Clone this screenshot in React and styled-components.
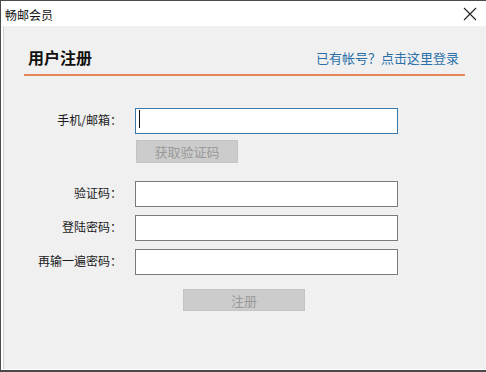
import React from 'react'
import styled, {createGlobalStyle} from 'styled-components'

const GlobalStyle = createGlobalStyle`
html, body {
  margin: 0;
  padding: 0;
  background: #f0f0f0;
}
body {
  font-family: "Noto Sans CJK SC", "Microsoft YaHei", sans-serif;
}
`

const Window = styled.div`
width: 486px;
height: 372px;
box-sizing: border-box;
display: flex;
flex-direction: column;
border-top: 1px solid #4a4a4a;
border-left: 1px solid #4a4a4a;
border-bottom: 2px solid #4a4a4a;
background: #ffffff;
overflow: hidden;
`

const TitleBar = styled.div`
height: 25px;
display: flex;
align-items: center;
justify-content: space-between;
padding: 1px 9px 0 4px;
box-sizing: border-box;
background: #ffffff;
font-size: 12px;
color: #111;
`

const Close = styled.button`
width: 14px;
height: 14px;
padding: 0;
border: none;
background: none;
display: flex;
`

const Body = styled.div`
flex: 1;
margin-left: 2px;
margin-bottom: 1px;
background: #f0f0f0;
border-left: 1px solid #d0d0d0;
padding-left: 1px;
`

const Header = styled.div`
margin: 20px 21px 0 19px;
height: 22px;
padding: 0 6px 6px 4px;
display: flex;
align-items: center;
justify-content: space-between;
border-bottom: 2px solid #e8885a;
`

const Heading = styled.h1`
margin: 0;
font-size: 16px;
font-weight: 700;
color: #111;
`

const Link = styled.a`
font-size: 13px;
color: #2a6fa9;
text-decoration: none;
cursor: pointer;
`

const Form = styled.div`
display: flex;
flex-direction: column;
margin-left: 20px;
padding-top: 30px;
`

const Row = styled.div`
display: grid;
grid-template-columns: 97px 263px;
column-gap: 13px;
align-items: center;
margin-top: ${pr => pr.$top}px;
`

const Label = styled.label`
text-align: right;
font-size: 12px;
color: #1a1a1a;
white-space: nowrap;
`

const FieldWrap = styled.div`
position: relative;
height: 26px;
`

const Input = styled.input`
width: 100%;
height: 100%;
box-sizing: border-box;
margin: 0;
border: 1px solid ${pr => pr.$focused ? '#3a79ad' : '#7a7a7a'};
background: #fff;
outline: none;
padding: 0 4px;
font-size: 12px;
`

const Caret = styled.span`
position: absolute;
left: 4px;
top: 4px;
width: 1px;
height: 18px;
background: #111;
`

const Button = styled.button`
grid-column: ${pr => pr.$col || 'auto'};
justify-self: start;
width: ${pr => pr.$w}px;
height: ${pr => pr.$h}px;
margin: 0 0 0 ${pr => pr.$left || 0}px;
padding: 0;
border: 1px solid #c4c4c4;
background: #cccccc;
color: #9a9a9a;
font-family: inherit;
font-size: 13px;
`

const CloseIcon = () => (
    <svg width="14" height="14" viewBox="0 0 14 14">
        <path d="M1 1 L13 13 M13 1 L1 13" stroke="#222" strokeWidth="1.1" fill="none" />
    </svg>
)

const fields = [
    {label: '验证码：', top: 16},
    {label: '登陆密码：', top: 8},
    {label: '再输一遍密码：', top: 8},
]

const App = () => {
    return(
        <Window>
            <GlobalStyle />
            <TitleBar>
                <span>畅邮会员</span>
                <Close><CloseIcon /></Close>
            </TitleBar>
            <Body>
                <Header>
                    <Heading>用户注册</Heading>
                    <Link>已有帐号？点击这里登录</Link>
                </Header>
                <Form>
                    <Row $top={0}>
                        <Label>手机/邮箱：</Label>
                        <FieldWrap>
                            <Input $focused />
                            <Caret />
                        </FieldWrap>
                    </Row>
                    <Row $top={8}>
                        <Button $col="2" $w={102} $h={23} $left={1}>获取验证码</Button>
                    </Row>
                    {fields.map(f => (
                        <Row key={f.label} $top={f.top}>
                            <Label>{f.label}</Label>
                            <FieldWrap>
                                <Input type={f.label === '验证码：' ? 'text' : 'password'} />
                            </FieldWrap>
                        </Row>
                    ))}
                    <Row $top={16}>
                        <Button $col="2" $w={122} $h={22} $left={48}>注册</Button>
                    </Row>
                </Form>
            </Body>
        </Window>
    );
}

export default App;
